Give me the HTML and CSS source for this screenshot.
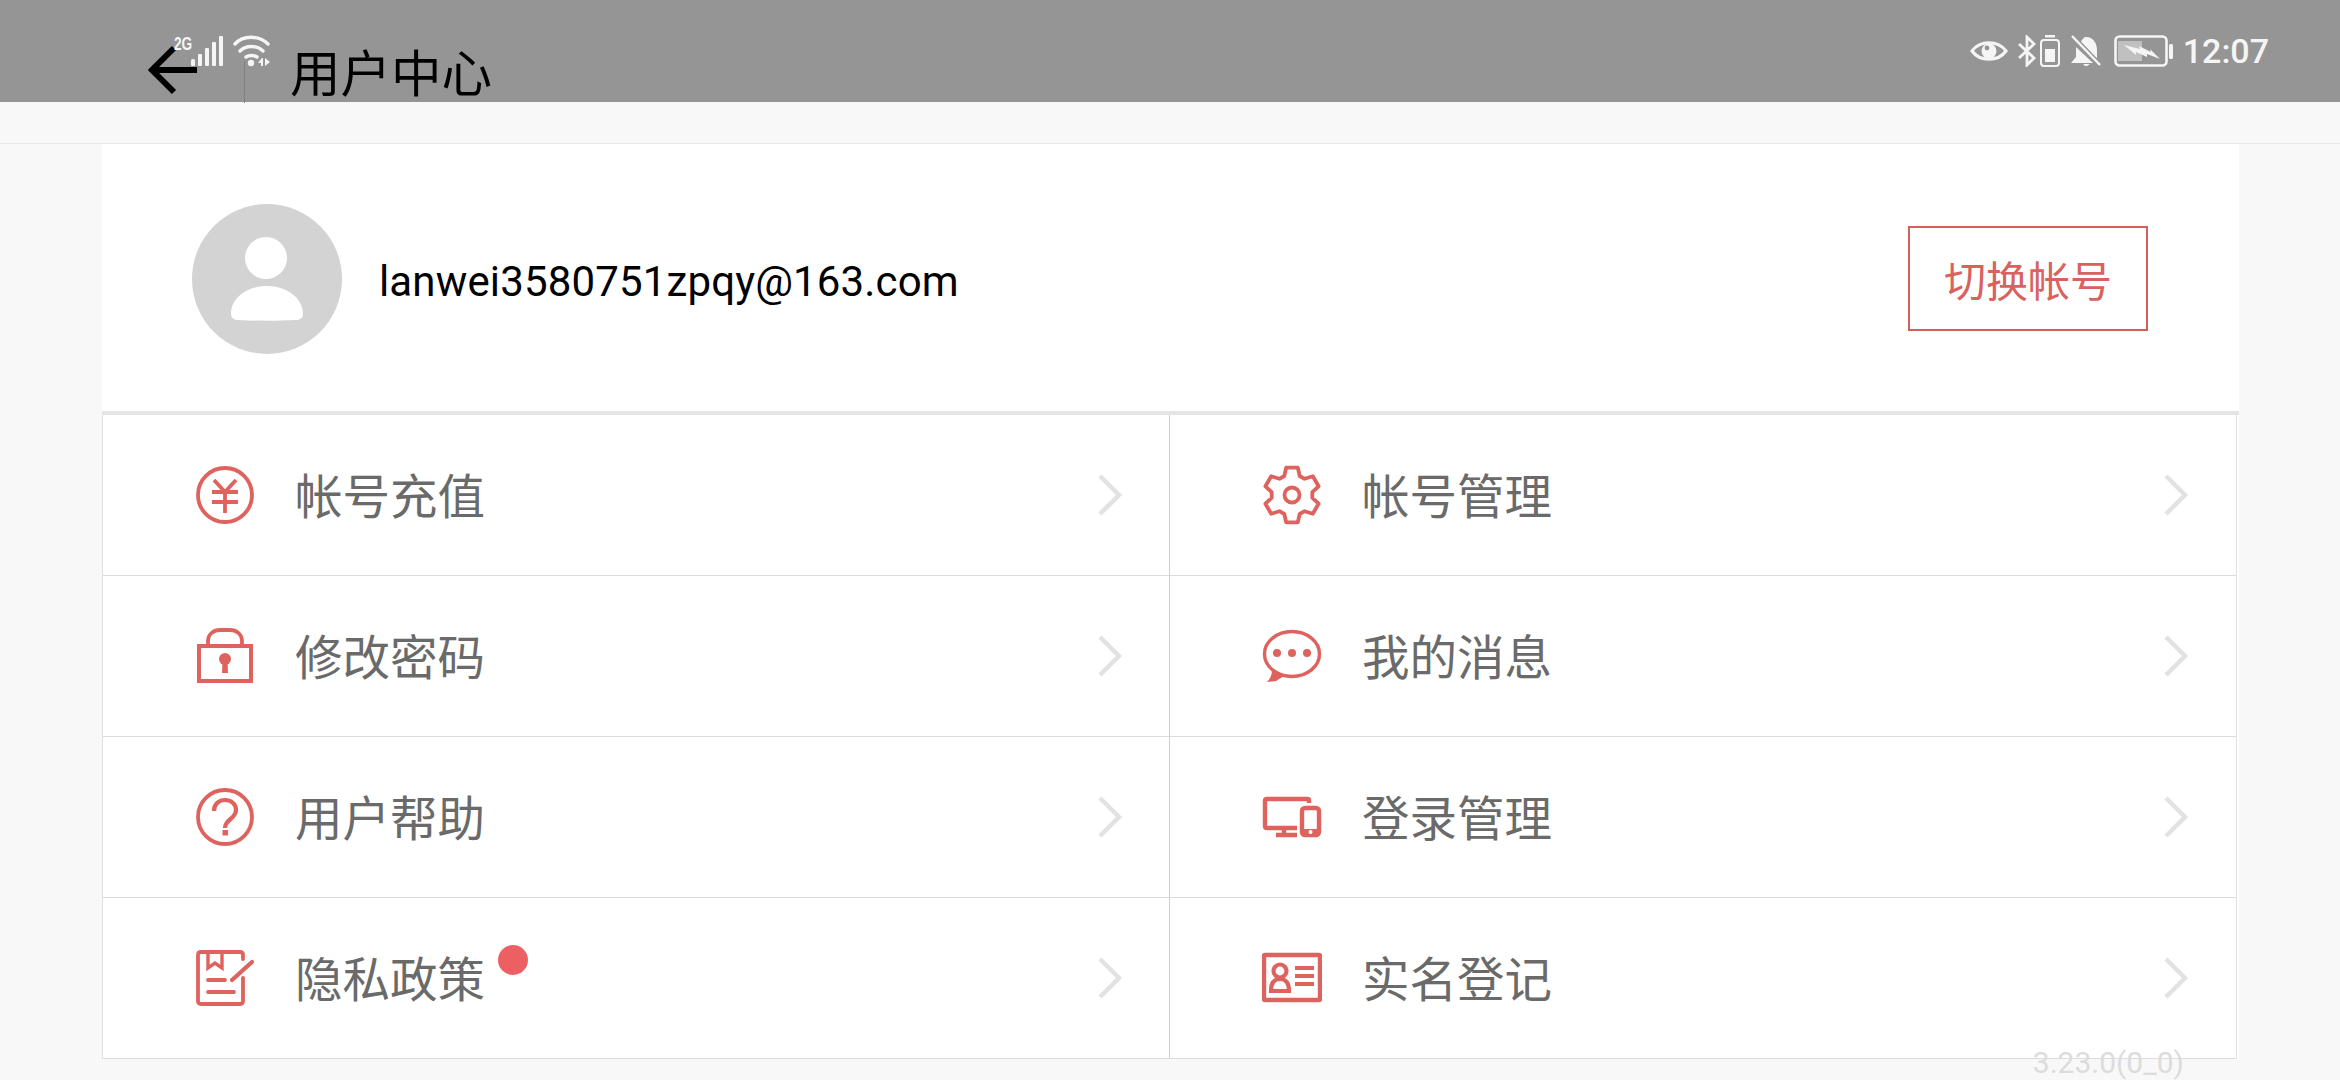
FILE: index.html
```html
<!DOCTYPE html>
<html lang="zh-CN">
<head>
    <meta charset="UTF-8">
    <title>用户中心</title>
    <link rel="stylesheet" href="styles.css">
</head>
<body>
    <header class="topbar">
        <svg class="back" viewBox="0 0 52 52"><path d="M50 25H5M27 3L5 25l22 22" fill="none" stroke="#000" stroke-width="6"/></svg>
        <div class="divider"></div>
        <h1 class="title">用户中心</h1>

        <!-- system status bar sits on top of the app bar -->
        <div class="status status-left">
            <span class="net">2G</span>
            <svg class="signal" viewBox="0 0 34 32"><g fill="#f5f5f5"><rect x="1" y="24" width="4" height="7" rx="1.5"/><rect x="8" y="19" width="4" height="12" rx="1"/><rect x="15" y="13" width="4" height="18" rx="1"/><rect x="22" y="7" width="4" height="24" rx="1"/><rect x="29" y="1" width="4" height="30" rx="1"/></g></svg>
            <svg class="wifi" viewBox="0 0 38 32"><g fill="none" stroke="#f5f5f5" stroke-width="3.4" stroke-linecap="round"><path d="M2 9C10 0 26 0 35 9"/><path d="M7 16c6-6 17-6 23 0"/><path d="M13 22c3-2 8-2 11 0"/></g><circle cx="18" cy="28" r="3.2" fill="#f5f5f5"/><path d="M29 23l-4 5h3v3h2v-8zM32 23l5 4-5 4z" fill="#f5f5f5"/></svg>
        </div>
        <div class="status status-right">
            <svg class="eye" viewBox="0 0 38 28"><path d="M2 14C10 3 28 3 36 14 28 25 10 25 2 14z" fill="none" stroke="#f5f5f5" stroke-width="3.2"/><circle cx="19" cy="14" r="7.5" fill="#f5f5f5"/><circle cx="17" cy="11" r="2.4" fill="#959595"/></svg>
            <svg class="bt" viewBox="0 0 20 32"><path d="M2 9l15 14-7 7V2l7 7L2 23" fill="none" stroke="#f5f5f5" stroke-width="2.8"/></svg>
            <svg class="cell" viewBox="0 0 20 32"><rect x="5" y="0" width="10" height="2.5" fill="#f5f5f5"/><rect x="1" y="5" width="18" height="26" rx="3" fill="none" stroke="#f5f5f5" stroke-width="2"/><rect x="5" y="14" width="10" height="13" fill="#f5f5f5"/></svg>
            <svg class="bell" viewBox="0 0 32 32"><path d="M16 2c7 0 11 6 11 13v9L11 7c1-3 3-5 5-5zM6 12l17 16H1l5-6z" fill="#f5f5f5"/><path d="M13 29h7l-3 2h-2z" fill="#f5f5f5"/><path d="M2 1l28 29" stroke="#959595" stroke-width="5"/><path d="M2 1l28 29" stroke="#f5f5f5" stroke-width="2.4"/></svg>
            <svg class="batt" viewBox="0 0 60 32"><rect x="1.5" y="1.5" width="51" height="29" rx="4" fill="none" stroke="#f5f5f5" stroke-width="2.6"/><rect x="4" y="6" width="24" height="20" fill="#c0c0c0"/><path d="M10 10l16 4-1-3 12 6-1-3 10 10-13-5v3l-11-5v3z" fill="#f5f5f5"/><rect x="55" y="9" width="4" height="15" rx="1.5" fill="#f5f5f5"/></svg>
            <span class="time">12:07</span>
        </div>
    </header>

    <div class="subbar"></div>

    <main class="card">
        <section class="profile">
            <div class="avatar">
                <svg viewBox="0 0 150 150"><circle cx="74" cy="54" r="21" fill="#fff"/><path d="M47 116c-5 0-8-2-8-6 0-16 16-28 36-28s36 12 36 28c0 4-3 6-8 6-18 1-38 1-56 0z" fill="#fff"/></svg>
            </div>
            <div class="email">lanwei3580751zpqy@163.com</div>
            <div class="switch-btn">切换帐号</div>
        </section>

        <section class="menu">
            <div class="row">
                <svg class="ico" viewBox="0 0 60 60"><circle cx="30" cy="30" r="27" fill="none" stroke="#de625d" stroke-width="3.8"/><path d="M19 15l11 12 11-12M17 27h26M17 37h26M30 27v21" fill="none" stroke="#de625d" stroke-width="3.8"/></svg>
                <span class="label">帐号充值</span>
                <svg class="chev" viewBox="0 0 26 44"><path d="M3 3l19 19L3 41" fill="none" stroke="#e2e2e2" stroke-width="4.4"/></svg>
            </div>
            <div class="row">
                <svg class="ico" viewBox="0 0 60 60"><path d="M22.3 11L24.2 2.6H35.8L37.7 11 42.6 13.8 50.8 11.3 56.6 21.3 50.3 27.1V32.9L56.6 38.7 50.8 48.7 42.6 46.2 37.7 49 35.8 57.4H24.2L22.3 49 17.4 46.2 9.2 48.7 3.4 38.7 9.7 32.9V27.1L3.4 21.3 9.2 11.3 17.4 13.8z" fill="none" stroke="#de625d" stroke-width="3.8" stroke-linejoin="round"/><circle cx="30" cy="30" r="7.5" fill="none" stroke="#de625d" stroke-width="3.8"/></svg>
                <span class="label">帐号管理</span>
                <svg class="chev" viewBox="0 0 26 44"><path d="M3 3l19 19L3 41" fill="none" stroke="#e2e2e2" stroke-width="4.4"/></svg>
            </div>
            <div class="row">
                <svg class="ico" viewBox="0 0 60 60"><path d="M13 19v-4C13 8 19 4 25 4h10c6 0 12 4 12 11v4" fill="none" stroke="#de625d" stroke-width="3.8"/><rect x="4" y="20" width="52" height="35" fill="none" stroke="#de625d" stroke-width="4"/><circle cx="30" cy="33" r="6" fill="#de625d"/><path d="M27.5 35h5l.5 12h-6z" fill="#de625d"/></svg>
                <span class="label">修改密码</span>
                <svg class="chev" viewBox="0 0 26 44"><path d="M3 3l19 19L3 41" fill="none" stroke="#e2e2e2" stroke-width="4.4"/></svg>
            </div>
            <div class="row">
                <svg class="ico" viewBox="0 0 60 60"><ellipse cx="30" cy="28" rx="27.5" ry="22.5" fill="none" stroke="#de625d" stroke-width="3.4"/><circle cx="15" cy="27" r="4" fill="#de625d"/><circle cx="30" cy="27" r="4" fill="#de625d"/><circle cx="45" cy="27" r="4" fill="#de625d"/><path d="M10 44l12 6-8 5-9 1c3-3 5-7 5-12z" fill="#de625d"/></svg>
                <span class="label">我的消息</span>
                <svg class="chev" viewBox="0 0 26 44"><path d="M3 3l19 19L3 41" fill="none" stroke="#e2e2e2" stroke-width="4.4"/></svg>
            </div>
            <div class="row">
                <svg class="ico" viewBox="0 0 60 60"><circle cx="30" cy="30" r="27" fill="none" stroke="#de625d" stroke-width="3.8"/><path d="M19 24c0-7 5-11 11-11s11 4 11 10c0 9-11 9-11 18" fill="none" stroke="#de625d" stroke-width="4.2"/><rect x="27.5" y="43" width="5.5" height="5.5" fill="#de625d"/></svg>
                <span class="label">用户帮助</span>
                <svg class="chev" viewBox="0 0 26 44"><path d="M3 3l19 19L3 41" fill="none" stroke="#e2e2e2" stroke-width="4.4"/></svg>
            </div>
            <div class="row">
                <svg class="ico" viewBox="0 0 60 60"><path d="M47 16v-3c0-1-1-1-2-1H5c-2 0-2 0-2 2v25c0 2 0 2 2 2h30" fill="none" stroke="#de625d" stroke-width="4.4"/><path d="M22 41v7M14 48h21" stroke="#de625d" stroke-width="4.4" fill="none"/><rect x="40" y="21" width="17" height="27" rx="3" fill="none" stroke="#de625d" stroke-width="4.4"/><rect x="40" y="42" width="17" height="7" fill="#de625d"/><circle cx="48.5" cy="45" r="2" fill="#fff"/></svg>
                <span class="label">登录管理</span>
                <svg class="chev" viewBox="0 0 26 44"><path d="M3 3l19 19L3 41" fill="none" stroke="#e2e2e2" stroke-width="4.4"/></svg>
            </div>
            <div class="row">
                <svg class="ico" viewBox="0 0 60 60"><path d="M48 30v23c0 2-1 3-3 3H6c-2 0-3-1-3-3V7c0-2 1-3 3-3h39c2 0 3 1 3 3v4" fill="none" stroke="#de625d" stroke-width="3.8" stroke-linecap="round"/><path d="M13 5v15l7-5 7 5V5" fill="none" stroke="#de625d" stroke-width="3.4"/><path d="M13 32h17M13 44h26" stroke="#de625d" stroke-width="3.8" stroke-linecap="round"/><path d="M37 32l20-18" stroke="#de625d" stroke-width="4.2" stroke-linecap="round"/></svg>
                <span class="label">隐私政策</span>
                <span class="dot"></span>
                <svg class="chev" viewBox="0 0 26 44"><path d="M3 3l19 19L3 41" fill="none" stroke="#e2e2e2" stroke-width="4.4"/></svg>
            </div>
            <div class="row">
                <svg class="ico" viewBox="0 0 60 60"><rect x="2" y="7" width="56" height="45" rx="1" fill="none" stroke="#de625d" stroke-width="4.4"/><circle cx="18" cy="23" r="6.5" fill="none" stroke="#de625d" stroke-width="4.2"/><path d="M9 43c0-8 3-12 9-12s9 4 9 12z" fill="none" stroke="#de625d" stroke-width="4.2"/><path d="M33 20h19M33 28h19M33 36h19" stroke="#de625d" stroke-width="4.2"/></svg>
                <span class="label">实名登记</span>
                <svg class="chev" viewBox="0 0 26 44"><path d="M3 3l19 19L3 41" fill="none" stroke="#e2e2e2" stroke-width="4.4"/></svg>
            </div>
        </section>
    </main>

    <div class="version">3.23.0(0_0)</div>
</body>
</html>
```

FILE: styles.css
```css
* {
    margin: 0;
    padding: 0;
    box-sizing: border-box;
}

html, body {
    width: 2340px;
    height: 1080px;
    overflow: hidden;
}

body {
    position: relative;
    background: #f8f8f8;
    font-family: "Noto Sans CJK SC", Roboto, sans-serif;
}

.topbar {
    position: relative;
    height: 102px;
    background: #959595;
    display: flex;
    align-items: flex-end;
    padding-left: 147px;
}

.back {
    width: 52px;
    height: 52px;
    margin-bottom: 5px;
}

.divider {
    width: 1px;
    height: 42px;
    background: #808080;
    margin-left: 45px;
    margin-bottom: -1px;
}

.title {
    font-size: 50.5px;
    font-weight: 400;
    color: #000;
    line-height: 60px;
    margin-left: 45px;
    margin-bottom: 2px;
}

.status {
    position: absolute;
    display: flex;
    align-items: center;
    color: #f5f5f5;
}

.status-left {
    left: 174px;
    top: 35px;
    height: 32px;
}

.net {
    width: 16px;
    font-family: "Liberation Sans", sans-serif;
    font-size: 19px;
    line-height: 17px;
    font-weight: 700;
    align-self: flex-start;
    transform: scaleX(.72);
    transform-origin: left;
}

.signal {
    width: 34px;
    height: 32px;
}

.wifi {
    width: 38px;
    height: 32px;
    margin-left: 9px;
}

.status-right {
    right: 71px;
    top: 35px;
    height: 32px;
}

.eye {
    width: 38px;
    height: 28px;
}

.bt {
    width: 20px;
    height: 32px;
    margin-left: 9px;
}

.cell {
    width: 20px;
    height: 32px;
    margin-left: 3px;
}

.bell {
    width: 32px;
    height: 32px;
    margin-left: 10px;
}

.batt {
    width: 60px;
    height: 32px;
    margin-left: 12px;
}

.time {
    font-family: Roboto, sans-serif;
    font-size: 34px;
    font-weight: 500;
    margin-left: 9px;
}

.subbar {
    height: 42px;
    border-bottom: 1px solid #e6e6e6;
}

.card {
    width: 2137px;
    margin-left: 102px;
    background: #fff;
}

.profile {
    height: 271px;
    padding: 60px 91px 0 90px;
    display: flex;
    align-items: flex-start;
    border-bottom: 4px solid #e4e4e4;
}

.avatar {
    width: 150px;
    height: 150px;
    border-radius: 50%;
    background: #d3d3d3;
}

.avatar svg {
    display: block;
    width: 150px;
    height: 150px;
}

.email {
    font-family: Roboto, sans-serif;
    font-size: 42px;
    letter-spacing: .15px;
    color: #000;
    line-height: 156px;
    margin-left: 37px;
    flex: 1;
}

.switch-btn {
    width: 240px;
    height: 105px;
    margin-top: 22px;
    border: 2px solid #d4605c;
    color: #d9625e;
    font-size: 42px;
    display: flex;
    align-items: center;
    justify-content: center;
}

.menu {
    width: 2135px;
    display: grid;
    grid-template-columns: 1067px 1fr;
    grid-auto-rows: 161px;
    border-left: 1px solid #e0e0e0;
    border-right: 1px solid #e0e0e0;
}

.row {
    display: flex;
    align-items: center;
    padding-left: 92px;
    padding-right: 47px;
    border-bottom: 1px solid #dcdcdc;
}

.row:nth-child(odd) {
    border-right: 1px solid #cfcfcf;
    padding-right: 46px;
}

.ico {
    width: 60px;
    height: 60px;
    flex: none;
}

.label {
    font-size: 47.5px;
    color: #6a6a6a;
    margin-left: 40px;
    margin-bottom: 4px;
}

.dot {
    width: 30px;
    height: 30px;
    border-radius: 50%;
    background: #ec5f63;
    margin-left: 13px;
    margin-bottom: 36px;
}

.chev {
    width: 26px;
    height: 44px;
    margin-left: auto;
}

.version {
    position: absolute;
    right: 156px;
    bottom: 0;
    font-family: Roboto, sans-serif;
    font-size: 30px;
    color: #dcdcdc;
    line-height: 34px;
}
```
